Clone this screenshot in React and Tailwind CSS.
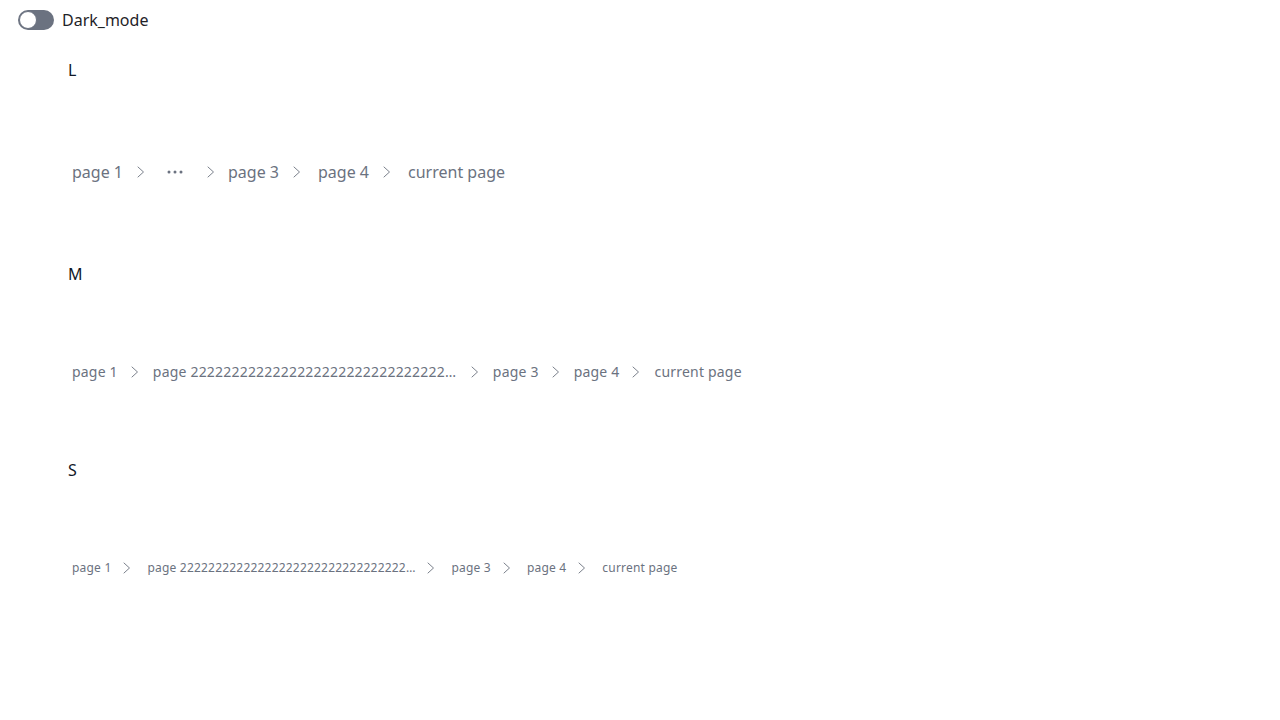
import React, { useState } from "react";

const longName = "page " + "2".repeat(60);

const Chevron = ({ className }) => (
  <svg width="16" height="16" viewBox="0 0 16 16" fill="none" className={className}>
    <path d="M5 3 L10.5 8 L5 13" stroke="#7b818c" strokeWidth="1" strokeLinecap="round" strokeLinejoin="round" />
  </svg>
);

const Dots = () => (
  <svg width="16" height="16" viewBox="0 0 16 16" fill="#6b7280">
    <circle cx="2" cy="8" r="1.5" />
    <circle cx="8" cy="8" r="1.5" />
    <circle cx="14" cy="8" r="1.5" />
  </svg>
);

const sizes = {
  L: { text: "text-[16px] leading-6", sep: "ml-[6px] mr-[9px]", long: null },
  M: { text: "text-[14px] leading-5 tracking-[0.2px]", sep: "ml-[5px] mr-[6px]", long: "max-w-[313px]" },
  S: { text: "text-[12px] leading-4 tracking-[0.2px]", sep: "ml-[4px] mr-[8px]", long: "max-w-[276px]" },
};

const Breadcrumb = ({ size }) => {
  const s = sizes[size];
  return (
    <nav className={`flex items-center text-[#6b7280] ${s.text}`}>
      <span className="px-1">page 1</span>
      <Chevron className={`shrink-0 ${size === "L" ? "ml-[6px] mr-[10px]" : s.sep}`} />
      {size === "L" ? (
        <span className="flex w-[38px] justify-start pl-[8px]">
          <Dots />
        </span>
      ) : (
        <span className={`block truncate px-1 ${s.long}`}>{longName}</span>
      )}
      <Chevron className={`shrink-0 ${size === "L" ? "ml-[6px] mr-[5px]" : s.sep}`} />
      <span className="px-1">page 3</span>
      <Chevron className={`shrink-0 ${s.sep}`} />
      <span className="px-1">page 4</span>
      <Chevron className={`shrink-0 ${s.sep}`} />
      <span className="px-1">current page</span>
    </nav>
  );
};

export default function App() {
  const [dark, setDark] = useState(false);

  return (
    <div className="min-h-screen bg-white" style={{ fontFamily: '"Noto Sans", "Open Sans", sans-serif' }}>
      <div className="flex items-center gap-2 pl-[18px] pt-[10px]">
        <button
          onClick={() => setDark(!dark)}
          className="relative h-5 w-9 rounded-full bg-[#6b7280]"
        >
          <span className="absolute left-[1px] top-[1px] h-[18px] w-[18px] rounded-full border border-[#6b7280] bg-white" />
        </button>
        <span className="text-[16px] leading-5 text-[#1f2328]">Dark_mode</span>
      </div>

      <div className="pl-[68px]">
        <div className="mt-[28px] text-[16px] leading-6 text-[#111827]">L</div>
        <div className="mt-[78px]">
          <Breadcrumb size="L" />
        </div>

        <div className="mt-[78px] text-[16px] leading-6 text-[#111827]">M</div>
        <div className="mt-[76px]">
          <Breadcrumb size="M" />
        </div>

        <div className="mt-[76px] text-[16px] leading-6 text-[#111827]">S</div>
        <div className="mt-[78px]">
          <Breadcrumb size="S" />
        </div>
      </div>
    </div>
  );
}
